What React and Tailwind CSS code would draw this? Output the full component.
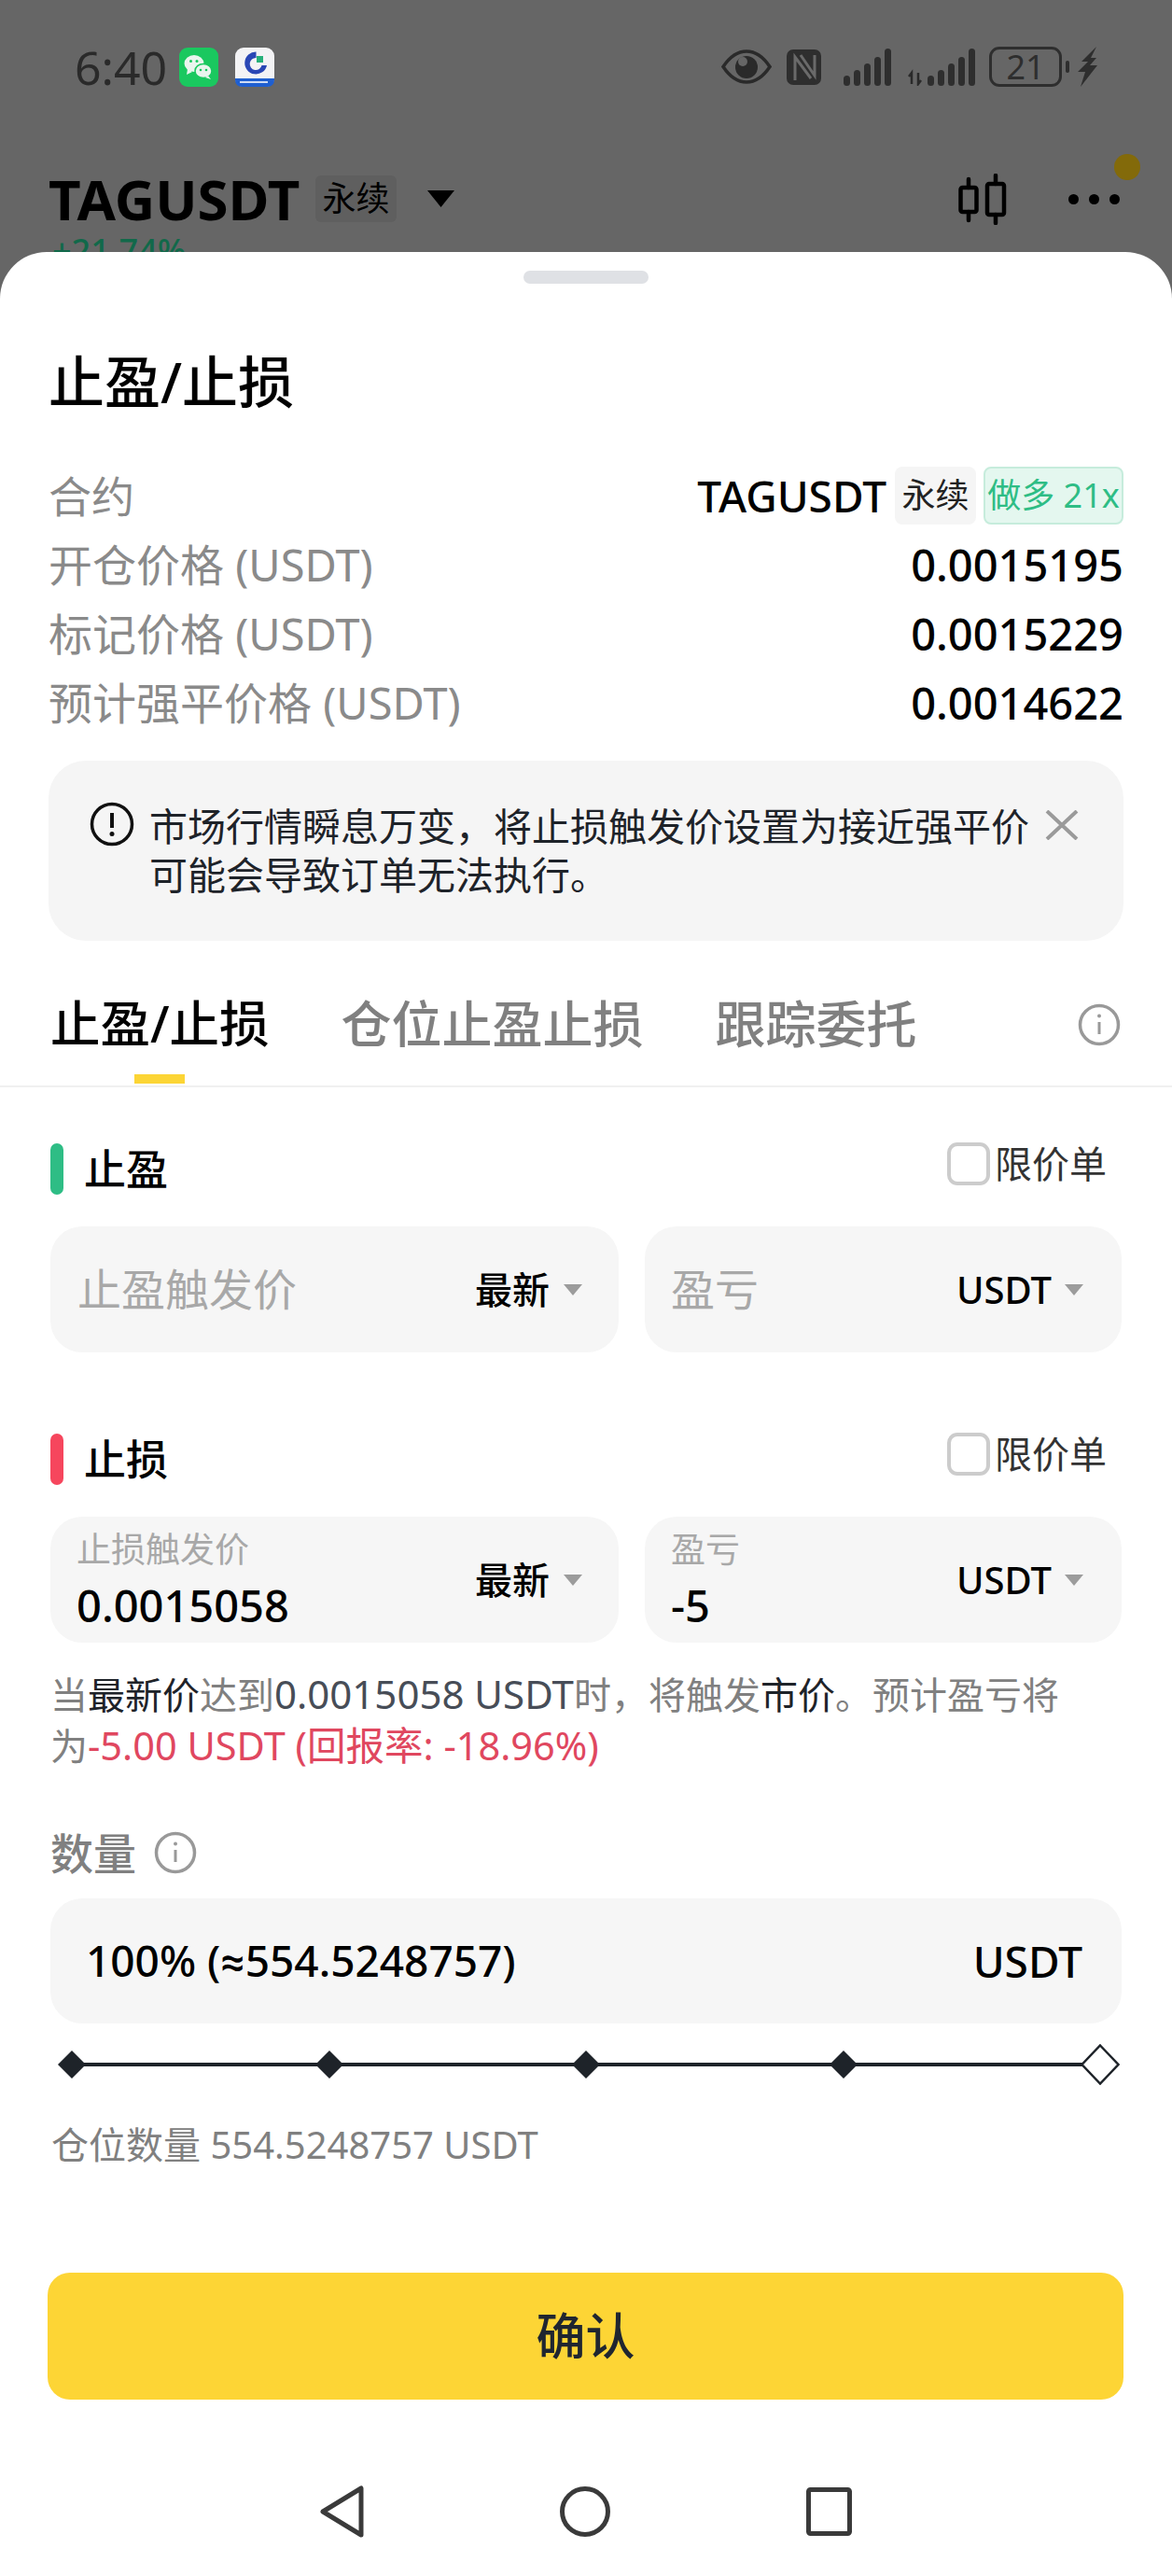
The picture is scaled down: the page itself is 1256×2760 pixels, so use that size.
const ink = "#000000";

function WeChatIcon() {
  return (
    <svg width="42" height="42" viewBox="0 0 42 42">
      <rect width="42" height="42" rx="9" fill="#1ac85f" />
      <ellipse cx="16" cy="17" rx="10.5" ry="9" fill="#eaf5ee" />
      <path d="M9 23l-1 6 6-3z" fill="#eaf5ee" />
      <ellipse cx="26" cy="25" rx="9" ry="7.5" fill="#eaf5ee" stroke="#1ac85f" strokeWidth="1.5" />
      <path d="M31 30l3 4-6-2z" fill="#eaf5ee" />
      <circle cx="12.5" cy="14.5" r="1.5" fill="#1ac85f" />
      <circle cx="19" cy="14.5" r="1.5" fill="#1ac85f" />
      <circle cx="23" cy="24" r="1.3" fill="#1ac85f" />
      <circle cx="29" cy="24" r="1.3" fill="#1ac85f" />
    </svg>
  );
}

function WalletIcon() {
  return (
    <svg width="42" height="42" viewBox="0 0 42 42">
      <rect width="42" height="42" rx="9" fill="#f3f3f5" />
      <path d="M0 33h42v2a7 7 0 0 1-7 7H7a7 7 0 0 1-7-7z" fill="#1f5fd0" />
      <path d="M22.5 4.5a12 12 0 1 0 11.500 14.500h-5.500a6.500 6.500 0 1 1-6-8z" fill="#2a47b5" />
      <rect x="23" y="9" width="7" height="7" fill="#27b07a" />
      <rect x="5" y="36" width="30" height="2" fill="#cfdcf5" />
    </svg>
  );
}

function EyeIcon() {
  return (
    <svg width="54" height="37" viewBox="0 0 54 37">
      <path d="M2 18.500C10 6.500 18 2 27 2s17 4.500 25 16.500C44 30.500 36 35 27 35S10 30.500 2 18.500z" fill="none" stroke="#2a2a2a" strokeWidth="3.500" />
      <circle cx="27" cy="19" r="12" fill="#2a2a2a" />
      <circle cx="23" cy="13" r="5" fill="#666666" />
    </svg>
  );
}

function NfcIcon() {
  return (
    <svg width="37" height="38" viewBox="0 0 37 38">
      <rect width="37" height="38" rx="7" fill="#2e2e2e" />
      <path d="M9 33V8l17 23M15 6l15 22V6" fill="none" stroke="#6a6a6a" strokeWidth="3" />
    </svg>
  );
}

function SignalIcon({ arrows }) {
  const heights = [11, 17, 24, 31, 40];
  const start = arrows ? 23 : 0;
  return (
    <svg width={arrows ? 74 : 51} height="40" viewBox={arrows ? "0 0 74 40" : "0 0 51 40"}>
      {arrows && <path d="M6 38V26l-3 4M13 26v12l3-4" fill="none" stroke="#2a2a2a" strokeWidth="2.500" />}
      {heights.map((h, i) => (
        <rect key={i} x={start + i * 11} y={40 - h} width="7" height={h} rx="3.500" fill="#2e2e2e" />
      ))}
    </svg>
  );
}

function BoltIcon() {
  return (
    <svg width="21" height="43" viewBox="0 0 21 43">
      <path d="M20 0L4 16h7L0 27h8L3 43l18-23h-8l7-8h-6z" fill="#2e2e2e" />
    </svg>
  );
}

function CandleIcon() {
  return (
    <svg width="52" height="55" viewBox="0 0 52 55" fill="none" stroke={ink} strokeWidth="4.500" strokeLinecap="round">
      <rect x="2.500" y="15" width="17" height="26" rx="2" />
      <rect x="31" y="11" width="18" height="33" rx="2" />
      <path d="M11 6v9M11 41v9M40 2v9M40 44v9" />
    </svg>
  );
}

function Caret() {
  return (
    <svg width="22" height="14" viewBox="0 0 22 14">
      <path d="M1 1h20L11 13z" fill="#9c9c9c" />
    </svg>
  );
}

function InfoIcon() {
  return (
    <svg width="46" height="46" viewBox="0 0 46 46" fill="none" stroke="#999999">
      <circle cx="23" cy="23" r="20.500" strokeWidth="3.500" />
      <path d="M23 20v13" strokeWidth="3" />
      <circle cx="23" cy="13.500" r="2" fill="#999999" stroke="none" />
    </svg>
  );
}

function Row({ label, value }) {
  return (
    <div className="h-[74px] flex items-center justify-between">
      <span className="text-[47px] leading-none text-[#8a8a8a]">{label}</span>
      <span className="text-[47px] leading-none font-medium text-black">{value}</span>
    </div>
  );
}

function SectionHead({ color, label }) {
  return (
    <div className="h-[57px] pl-[54px] pr-[70px] flex items-start justify-between">
      <div className="flex items-start gap-[22px]">
        <div className={`mt-px w-[14px] h-[55px] rounded-full ${color}`} />
        <span className="h-[57px] flex items-center text-[45px] leading-none font-medium text-black">{label}</span>
      </div>
      <label className="flex items-center gap-[5px]">
        <span className="w-[46px] h-[46px] rounded-[11px] border-[4px] border-[#cccccc] bg-white" />
        <span className="text-[40px] leading-none text-[#333333]">限价单</span>
      </label>
    </div>
  );
}

function Field({ width, label, value, unit, unitGap, pad }) {
  return (
    <div className={`${width} h-[135px] rounded-[34px] bg-[#f6f6f6] flex items-center justify-between ${pad}`}>
      {value ? (
        <div className="flex flex-col -mt-[4px]">
          <span className="h-[46px] flex items-center text-[37px] leading-none text-[#a8a8a8]">{label}</span>
          <span className="mt-[13px] h-[50px] flex items-center text-[47px] leading-none font-medium text-black">{value}</span>
        </div>
      ) : (
        <span className="text-[47px] leading-none text-[#a8a8a8]">{label}</span>
      )}
      <div className={`flex items-center ${unitGap}`}>
        <span className="text-[40px] leading-none font-medium text-black">{unit}</span>
        <Caret />
      </div>
    </div>
  );
}

function Diamond({ open }) {
  return (
    <svg width="42" height="44" viewBox="0 0 42 44" className="relative">
      {open ? (
        <path d="M21 1.500L40.500 22 21 42.500 1.500 22z" fill="#ffffff" stroke="#1e2329" strokeWidth="2.500" />
      ) : (
        <path d="M21 7l15 15-15 15L6 22z" fill="#1e2329" />
      )}
    </svg>
  );
}

export default function App() {
  return (
    <div className="w-[1256px] h-[2760px] bg-[#666666] flex flex-col overflow-hidden font-['Noto_Sans','Noto_Sans_CJK_SC',sans-serif]">
      {/* dimmed page behind the sheet */}
      <div className="relative h-[270px] shrink-0 overflow-hidden">
        <div className="pt-[50px] pl-[80px] pr-[80px] flex justify-between items-start">
          <div className="flex items-center">
            <span className="w-[97px] h-[44px] flex items-center text-[50px] leading-none text-[#2a2a2a]">6:40</span>
            <div className="ml-[15px]"><WeChatIcon /></div>
            <div className="ml-[18px]"><WalletIcon /></div>
          </div>
          <div className="flex items-center">
            <EyeIcon />
            <div className="ml-[16px]"><NfcIcon /></div>
            <div className="ml-[24px]"><SignalIcon /></div>
            <div className="ml-[16px]"><SignalIcon arrows /></div>
            <div className="ml-[15px] w-[78px] h-[43px] rounded-[11px] border-[3px] border-[#2e2e2e] flex items-center justify-center text-[36px] leading-none text-[#2e2e2e]">21</div>
            <div className="ml-[4px] w-[4px] h-[13px] rounded-full bg-[#2e2e2e]" />
            <div className="ml-[9px]"><BoltIcon /></div>
          </div>
        </div>
        <div className="mt-[94px] pl-[52px] pr-[56px] h-[50px] flex items-center justify-between">
          <div className="flex items-center">
            <span className="w-[270px] text-[60px] leading-none font-bold text-black">TAGUSDT</span>
            <span className="ml-[16px] w-[87px] h-[50px] rounded-[6px] bg-[#5f5f5f] flex items-center justify-center text-[36px] leading-none text-black">永续</span>
            <svg width="29" height="18" viewBox="0 0 29 18" className="ml-[33px]">
              <path d="M0 0h29L14.500 18z" fill="#000000" />
            </svg>
          </div>
          <div className="flex items-center gap-[66px]">
            <CandleIcon />
            <div className="w-[55px] flex justify-between">
              <span className="w-[11px] h-[11px] rounded-full bg-black" />
              <span className="w-[11px] h-[11px] rounded-full bg-black" />
              <span className="w-[11px] h-[11px] rounded-full bg-black" />
            </div>
          </div>
        </div>
        <div className="mt-[11px] pl-[56px] h-[40px] text-[36px] leading-[40px] font-medium text-[#11694a]">+21.74%</div>
        <span className="absolute left-[1194px] top-[165px] w-[28px] h-[28px] rounded-full bg-[#836a0a]" />
      </div>

      {/* bottom sheet */}
      <div className="flex-1 bg-white rounded-t-[50px] flex flex-col">
        <div className="mt-[20px] mx-auto w-[134px] h-[14px] rounded-full bg-[#dfe1e5]" />

        <h1 className="mt-[65px] px-[52px] h-[80px] flex items-center text-[60px] leading-none font-medium text-black">止盈/止损</h1>

        <div className="mt-[45px] pl-[52px] pr-[52px]">
          <div className="h-[74px] flex items-center justify-between">
            <span className="text-[46px] leading-none text-[#8a8a8a]">合约</span>
            <div className="flex items-center">
              <span className="text-[46px] leading-none font-medium text-black">TAGUSDT</span>
              <span className="ml-[9px] w-[87px] h-[62px] rounded-[8px] bg-[#f5f5f5] flex items-center justify-center text-[36px] leading-none text-[#222222]">永续</span>
              <span className="ml-[8px] w-[150px] h-[62px] rounded-[8px] bg-[#e4f7ef] border-2 border-[#c6ecdc] flex items-center justify-center text-[36px] leading-none text-[#2ebd85]">做多 21x</span>
            </div>
          </div>
          <Row label="开仓价格 (USDT)" value="0.0015195" />
          <Row label="标记价格 (USDT)" value="0.0015229" />
          <Row label="预计强平价格 (USDT)" value="0.0014622" />
        </div>

        <div className="mt-[25px] mx-[52px] h-[193px] rounded-[40px] bg-[#f5f5f5] pl-[44px] pt-[44px] flex items-start">
          <svg width="48" height="48" viewBox="0 0 48 48" fill="none" stroke="#111111" className="shrink-0">
            <circle cx="24" cy="24" r="21.500" strokeWidth="3.500" />
            <path d="M24 12v16" strokeWidth="4" />
            <circle cx="24" cy="34.500" r="2.500" fill="#111111" stroke="none" />
          </svg>
          <p className="ml-[16px] w-[950px] text-[41px] leading-[52px] text-[#1e2329]">
            市场行情瞬息万变{"\uFF0C"}将止损触发价设置为接近强平价可能会导致订单无法执行。
          </p>
          <svg width="36" height="32" viewBox="0 0 36 32" fill="none" stroke="#9a9a9a" strokeWidth="4" className="mt-[9px] ml-[10px] shrink-0">
            <path d="M2 1l32 30M34 1L2 31" />
          </svg>
        </div>

        {/* tabs */}
        <div className="h-[157px] border-b-2 border-[#f0f0f0] pl-[54px] pr-[55px] flex items-start">
          <div className="mt-[54px] flex flex-col items-center">
            <span className="h-[70px] flex items-center text-[53.500px] leading-none font-medium text-black">止盈/止损</span>
            <span className="mt-[19px] w-[54px] h-[10px] bg-[#fcd535]" />
          </div>
          <span className="mt-[54px] ml-[77px] h-[70px] flex items-center text-[54px] leading-none font-medium text-[#808080]">仓位止盈止损</span>
          <span className="mt-[54px] ml-[77px] h-[70px] flex items-center text-[54px] leading-none font-medium text-[#808080]">跟踪委托</span>
          <div className="mt-[67px] ml-auto"><InfoIcon /></div>
        </div>

        <div className="mt-[59px]">
          <SectionHead color="bg-[#2ebd85]" label="止盈" />
        </div>
        <div className="mt-[33px] pl-[54px] flex gap-[28px]">
          <Field width="w-[609px]" label="止盈触发价" unit="最新" unitGap="gap-[14px]" pad="pl-[29px] pr-[38px]" />
          <Field width="w-[511px]" label="盈亏" unit="USDT" unitGap="gap-[13px]" pad="pl-[28px] pr-[40px]" />
        </div>

        <div className="mt-[86px]">
          <SectionHead color="bg-[#f6465d]" label="止损" />
        </div>
        <div className="mt-[33px] pl-[54px] flex gap-[28px]">
          <Field width="w-[609px]" label="止损触发价" value="0.0015058" unit="最新" unitGap="gap-[14px]" pad="pl-[28px] pr-[38px]" />
          <Field width="w-[511px]" label="盈亏" value="-5" unit="USDT" unitGap="gap-[13px]" pad="pl-[28px] pr-[40px]" />
        </div>

        <p className="mt-[28px] pl-[54px] w-[1160px] h-[108px] text-[40px] leading-[54px] text-[#808080]">
          当<span className="text-[#1e2329]">最新价</span>达到<span className="text-[42px] text-[#474d57]">0.0015058 USDT</span>时{"\uFF0C"}将触发<span className="text-[#1e2329]">市价</span>。预计盈亏将为<span className="text-[41.500px] text-[#e0475f]">-5.00 USDT (回报率: -18.96%)</span>
        </p>

        <div className="mt-[66px] pl-[54px] h-[46px] flex items-center gap-[19px]">
          <span className="text-[46px] leading-none font-medium text-[#808080]">数量</span>
          <InfoIcon />
        </div>

        <div className="mt-[26px] mx-[54px] h-[134px] rounded-[34px] bg-[#f6f6f6] pl-[38px] pr-[42px] flex items-center justify-between">
          <span className="text-[46px] leading-none font-medium text-black">100% (<span className="font-['Roboto']">≈</span>554.5248757)</span>
          <span className="text-[46px] leading-none font-medium text-black">USDT</span>
        </div>

        {/* slider */}
        <div className="mt-[22px] ml-[56px] w-[1144px] h-[44px] relative flex items-center justify-between">
          <div className="absolute left-[21px] right-[21px] top-[20px] h-[4px] bg-[#1e2329]" />
          <Diamond />
          <Diamond />
          <Diamond />
          <Diamond />
          <Diamond open />
        </div>

        <div className="mt-[37px] pl-[55px] h-[54px] flex items-center text-[40px] leading-none text-[#808080]">仓位数量 554.5248757 USDT</div>

        <button className="mt-[110px] ml-[51px] w-[1153px] h-[136px] rounded-[24px] bg-[#fdd535] text-[53px] font-medium text-[#202630]">确认</button>

        {/* android nav */}
        <div className="mt-[92px] h-[56px] flex items-center justify-center gap-[210px]">
          <svg width="47" height="56" viewBox="0 0 47 56" fill="none" stroke="#3a3a3a" strokeWidth="5" strokeLinejoin="round">
            <path d="M44 3v50L3 28z" />
          </svg>
          <svg width="54" height="56" viewBox="0 0 54 56" fill="none" stroke="#3a3a3a" strokeWidth="5">
            <circle cx="27" cy="28" r="24.500" />
          </svg>
          <svg width="49" height="52" viewBox="0 0 49 52" fill="none" stroke="#3a3a3a" strokeWidth="5" strokeLinejoin="round">
            <rect x="2.500" y="2.500" width="44" height="47" rx="2" />
          </svg>
        </div>
      </div>
    </div>
  );
}
